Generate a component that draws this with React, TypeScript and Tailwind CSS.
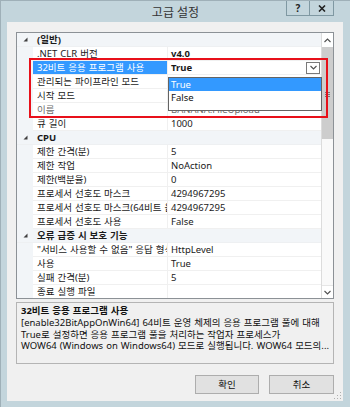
import React from 'react';

type Row = {
  cat?: boolean;
  name: string;
  value?: string;
  bold?: boolean;
  selected?: boolean;
  gray?: boolean;
};

const rows: Row[] = [
  { cat: true, name: '(일반)' },
  { name: '.NET CLR 버전', value: 'v4.0', bold: true },
  { name: '32비트 응용 프로그램 사용', value: 'True', bold: true, selected: true },
  { name: '관리되는 파이프라인 모드', value: '' },
  { name: '시작 모드', value: '' },
  { name: '이름', value: 'BANANA.FileUpload', gray: true },
  { name: '큐 길이', value: '1000' },
  { cat: true, name: 'CPU' },
  { name: '제한 간격(분)', value: '5' },
  { name: '제한 작업', value: 'NoAction' },
  { name: '제한(백분율)', value: '0' },
  { name: '프로세서 선호도 마스크', value: '4294967295' },
  { name: '프로세서 선호도 마스크(64비트 옵션)', value: '4294967295' },
  { name: '프로세서 선호도 사용', value: 'False' },
  { cat: true, name: '오류 급증 시 보호 기능' },
  { name: '"서비스 사용할 수 없음" 응답 형식', value: 'HttpLevel' },
  { name: '사용', value: 'True' },
  { name: '실패 간격(분)', value: '5' },
  { name: '종료 실행 파일', value: '' },
];

function Tri() {
  return (
    <svg width="5" height="5" viewBox="0 0 5 5" className="block">
      <path d="M4.5 0.5 L4.5 4.5 L0.5 4.5 Z" fill="#3f3f3f" />
    </svg>
  );
}

function Chevron({ up = false }: { up?: boolean }) {
  return (
    <svg width="7" height="5" viewBox="0 0 7 5" className="block">
      <path
        d={up ? 'M0.5 4 L3.5 1 L6.5 4' : 'M0.5 1 L3.5 4 L6.5 1'}
        fill="none"
        stroke="#505050"
        strokeWidth="1.1"
      />
    </svg>
  );
}

function GridRow({ r }: { r: Row }) {
  if (r.cat) {
    return (
      <div className="flex h-[14px] shrink-0 bg-[#f2f5f8] border-b border-[#eef0f2]">
        <div className="w-[16px] shrink-0 flex items-center justify-center pl-[1px]">
          <Tri />
        </div>
        <div className="pl-[4px] font-bold text-[#1a1a1a] leading-[14px] whitespace-nowrap [word-spacing:0.5px]">{r.name}</div>
      </div>
    );
  }
  return (
    <div className="flex h-[14px] shrink-0">
      <div className="w-[16px] shrink-0 bg-[#f2f5f8]" />
      <div
        className={
          'w-[135px] shrink-0 overflow-hidden whitespace-nowrap pl-[4px] leading-[13px] border-b border-r border-[#f0f0f0] [word-spacing:0.5px] ' +
          (r.selected ? 'bg-[#3399ff] text-white' : r.gray ? 'text-[#6d6d6d]' : 'text-[#1a1a1a]')
        }
      >
        {r.name}
      </div>
      <div
        className={
          'flex-1 flex items-center overflow-hidden whitespace-nowrap pl-[3px] border-b border-[#f0f0f0] h-[14px] ' +
          (r.gray ? 'text-[#6d6d6d]' : 'text-[#1a1a1a]') +
          (r.bold ? ' font-bold' : '')
        }
      >
        <span className="flex-1 leading-[13px]">{r.value}</span>
        {r.selected && (
          <div className="w-[14px] h-[12px] mr-[1px] border border-[#7a7a7a] bg-white flex items-center justify-center">
            <Chevron />
          </div>
        )}
      </div>
    </div>
  );
}

export default function App() {
  return (
    <div className="relative w-[350px] h-[407px] overflow-hidden bg-[#c3d5dc] border-t border-l border-[#9fb0b8] font-['Noto_Sans','Noto_Sans_CJK_KR',sans-serif] text-[9.5px] flex flex-col">
      {/* title bar */}
      <div className="relative h-[21px] shrink-0 flex items-center justify-center">
        <span className="text-[12px] text-[#333] leading-none mt-[2px]">고급 설정</span>
        <div className="absolute right-[16px] top-[-1px] flex">
          <div className="w-[24px] h-[16px] border border-[#7f98a2] flex items-center justify-center text-[10px] font-bold text-[#222]">
            ?
          </div>
          <div className="w-[24px] h-[16px] border border-l-0 border-[#7f98a2] flex items-center justify-center">
            <svg width="8" height="7" viewBox="0 0 8 7">
              <path d="M1 0.5 L7 6.5 M7 0.5 L1 6.5" stroke="#222" strokeWidth="1.6" />
            </svg>
          </div>
        </div>
      </div>

      {/* client area */}
      <div className="relative ml-[6px] w-[336px] h-[379px] bg-[#f0f0f0] flex flex-col px-[9px] pt-[10px]">
        {/* property grid */}
        <div className="h-[267px] shrink-0 border border-[#8c9196] bg-white flex overflow-hidden">
          <div className="flex-1 flex flex-col overflow-hidden">
            {rows.map((r, i) => (
              <GridRow key={i} r={r} />
            ))}
          </div>
          {/* scrollbar */}
          <div className="w-[12px] shrink-0 flex flex-col bg-[#f9f9f9] border-l border-[#dcdcdc]">
            <div className="h-[14px] shrink-0 flex items-center justify-center bg-white">
              <Chevron up />
            </div>
            <div className="h-[92px] shrink-0 bg-[#cdcdcd]" />
            <div className="flex-1" />
            <div className="h-[13px] shrink-0 flex items-center justify-center bg-white border-t border-[#e6e6e6]">
              <Chevron />
            </div>
          </div>
        </div>

        {/* description */}
        <div className="mt-[3px] h-[62px] shrink-0 border border-[#b4b4b4] bg-[#f0f0f0] px-[4px] pt-[2px] text-[#111] overflow-hidden [word-spacing:0.5px]">
          <div className="font-bold leading-[12px]">32비트 응용 프로그램 사용</div>
          <div className="leading-[11.5px] whitespace-nowrap">[enable32BitAppOnWin64] 64비트 운영 체제의 응용 프로그램 풀에 대해</div>
          <div className="leading-[11.5px] whitespace-nowrap">True로 설정하면 응용 프로그램 풀을 처리하는 작업자 프로세스가</div>
          <div className="leading-[11.5px] whitespace-nowrap">WOW64 (Windows on Windows64) 모드로 실행됩니다. WOW64 모드의...</div>
        </div>

        {/* buttons */}
        <div className="mt-[11px] flex justify-end gap-[10px]">
          <button className="w-[64px] h-[19px] border border-[#adadad] bg-[#e1e1e1] text-[#111] text-[9.5px] leading-none flex items-center justify-center">
            확인
          </button>
          <button className="w-[65px] h-[19px] border border-[#adadad] bg-[#e1e1e1] text-[#111] text-[9.5px] leading-none flex items-center justify-center">
            취소
          </button>
        </div>

        {/* size grip */}
        <svg className="absolute right-[1px] bottom-[1px]" width="9" height="9" viewBox="0 0 9 9">
          <rect x="7" y="1" width="1" height="1" fill="#b0b0b0" />
          <rect x="4" y="4" width="1" height="1" fill="#b0b0b0" />
          <rect x="7" y="4" width="1" height="1" fill="#b0b0b0" />
          <rect x="1" y="7" width="1" height="1" fill="#b0b0b0" />
          <rect x="4" y="7" width="1" height="1" fill="#b0b0b0" />
          <rect x="7" y="7" width="1" height="1" fill="#b0b0b0" />
        </svg>
      </div>

      {/* scrollbar thumb grip */}
      <div className="absolute left-[324px] top-[91px] flex flex-col gap-[1px]">
        <div className="w-[5px] h-[1px] bg-[#777]" />
        <div className="w-[5px] h-[1px] bg-[#777]" />
        <div className="w-[5px] h-[1px] bg-[#777]" />
      </div>

      {/* open dropdown list */}
      <div className="absolute left-[167px] top-[76px] w-[154px] h-[34px] border border-[#646464] bg-white flex flex-col">
        <div className="h-[13px] bg-[#3399ff] text-white pl-[2px] leading-[13px]">True</div>
        <div className="h-[13px] text-[#111] pl-[2px] leading-[13px]">False</div>
      </div>

      {/* red annotation rectangle */}
      <div className="absolute left-[28px] top-[57px] w-[299px] h-[60px] border-2 border-[#e8101a]" />
    </div>
  );
}
